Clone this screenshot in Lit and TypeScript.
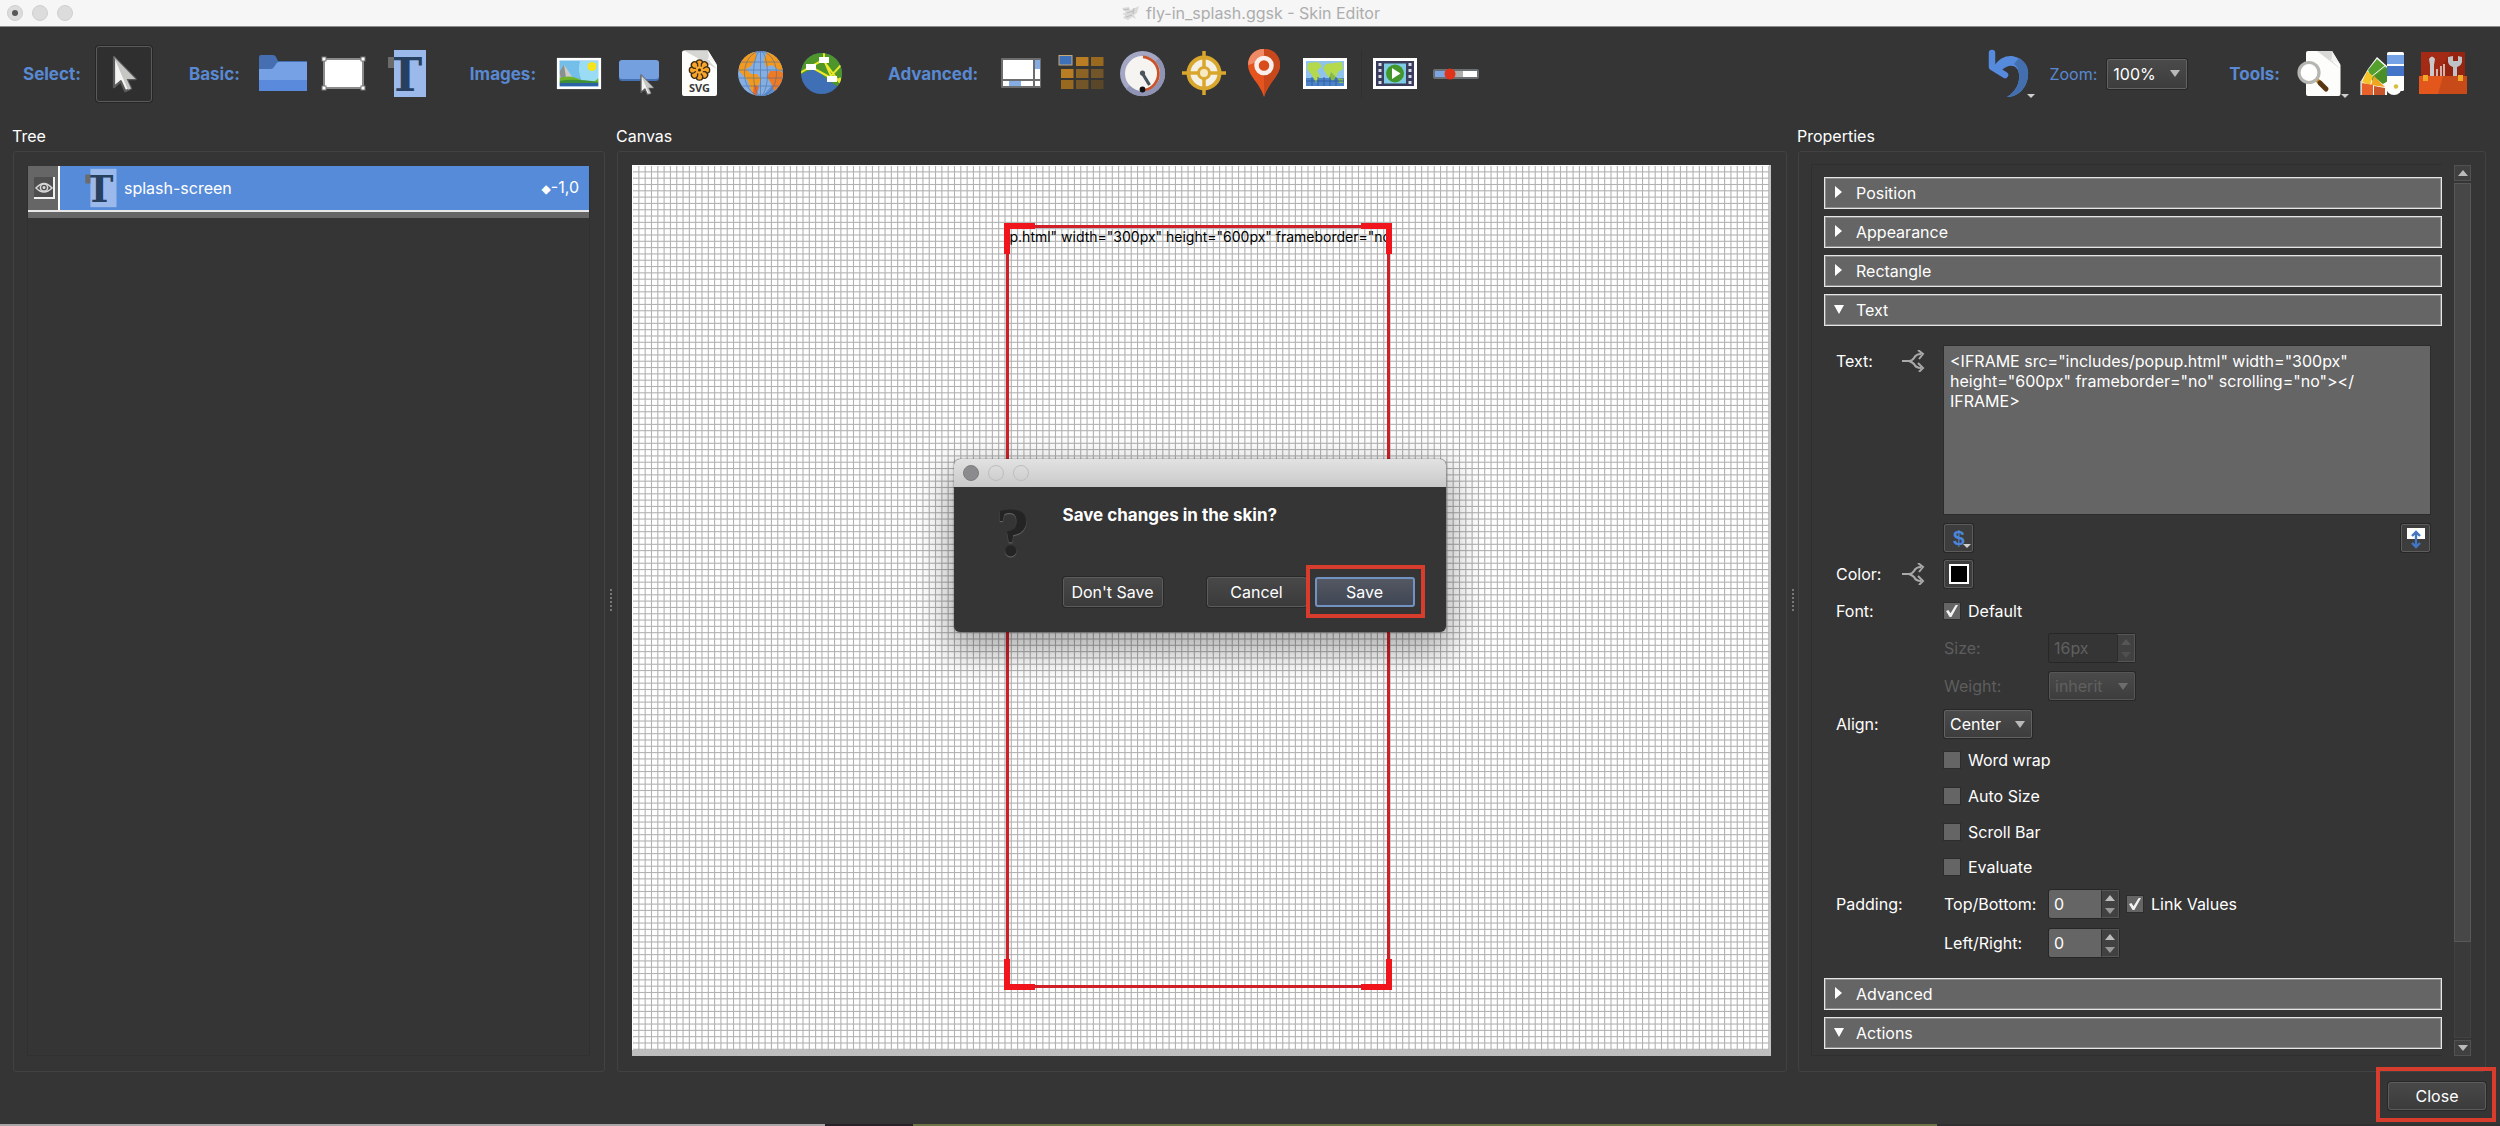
import { LitElement, html, css, svg, TemplateResult } from "lit";
import { customElement, property } from "lit/decorators.js";

const icon = (content: unknown) =>
  html`<svg class="icon" width="56" height="54" viewBox="0 0 56 54" aria-hidden="true">${content}</svg>`;

const cursor = (x: number, y: number, s: number) => svg`
  <g transform="translate(${x} ${y}) scale(${s})">
    <path d="M0 0V33.500L7.500 27L12.500 38L19 35L14 24.500H24Z" fill="#f4f4f2" stroke="#5b5b5b" stroke-width="2.500" stroke-linejoin="round"/>
    <path d="M0 0L24 24.500H14L19 35L15.500 36.500L9 21Z" fill="#c6c6c4"/>
  </g>`;

const dropMark = (x: number, y: number) =>
  svg`<path d="M${x} ${y}h8l-4 4z" fill="#cfcfcf"/>`;

const letterT = svg`
  <rect x="17" y="3" width="32" height="47" fill="#9bb9ea"/>
  <text class="slab" x="11" y="44" fill="#27405f">T</text>
  <rect x="11" y="10" width="6" height="11" fill="#6b6b6b"/>`;

const ICONS = {
  select: icon(cursor(17, 10, 0.9)),
  folder: icon(svg`
    <path d="M4 10q0-2 2-2h12q2 0 3 2l2 4h29v4H4z" fill="#456fb0"/>
    <path d="M4 11h16v12H4z" fill="#456fb0"/>
    <path d="M4 22h12q2 0 3-2l2-3q1-2 3-2h28v29H4z" fill="#76a1e5"/>
    <path d="M4 33h48v11H4z" fill="#5a8adb"/>`),
  rectangle: icon(svg`
    <rect x="8" y="12" width="39" height="29" fill="#fff" stroke="#8b8b8b" stroke-width="2"/>
    ${[[8, 12], [47, 12], [8, 41], [47, 41]].map(
      ([x, y]) => svg`<rect x=${x - 2} y=${y - 2} width="4" height="4" fill="#fff" stroke="#7a7a7a"/>`)}`),
  text: icon(letterT),
  image: icon(svg`
    <rect x="8" y="13" width="40" height="27" fill="#74bfe9"/>
    <path d="M29 14H48V34H31Q26 24 29 14z" fill="#9adcf4"/>
    <circle cx="41" cy="19.500" r="4.500" fill="#f7e21c"/>
    <path d="M8.500 27L13 17.500L22 31L25 36H8.500z" fill="#c9ccc9"/>
    <path d="M8.500 25L13 17.500L15 31L10 33z" fill="#8a8f90"/>
    <path d="M8.500 31Q20 27 30 33T47.500 31V35H8.500z" fill="#6fb42a"/>
    <path d="M8.500 34Q22 31 47.500 35V37H8.500z" fill="#3f8f3a"/>
    <path d="M8.500 36H47.500V39.500H8.500z" fill="#2b62a6"/>
    <rect x="7.200" y="12.200" width="41.600" height="28.600" fill="none" stroke="#fff" stroke-width="2.600"/>`),
  button: icon(svg`
    <rect x="7" y="14" width="40" height="20" rx="3" fill="#4470b4"/>
    <rect x="7" y="13" width="40" height="19" rx="3" fill="#74a0e0"/>
    ${cursor(29, 28, 0.52)}`),
  svg: icon(svg`
    <path d="M11 3.500H35L44 18V47q0 2-2 2H11q-2 0-2-2V5.500q0-2 2-2z" fill="#fdfdfc"/>
    <path d="M11 3.500H35L37 15L44 22z" fill="#d6d6d4"/>
    <path d="M35 3.500L44 18Q39 13 34.500 13Q37 9 35 3.500z" fill="#f6f6f4"/>
    ${[0, 45, 90, 135, 180, 225, 270, 315].map(a => svg`<g transform="rotate(${a} 26.500 23)">
      <circle cx="26.500" cy="16" r="3.200" fill="#f7a428" stroke="#3b2a12" stroke-width="1.300"/></g>`)}
    ${[0, 45, 90, 135, 180, 225, 270, 315].map(a => svg`<path transform="rotate(${a} 26.500 23)" d="M26.500 23V16.500" stroke="#f7a428" stroke-width="2.200"/>`)}
    <circle cx="26.500" cy="23" r="1.600" fill="#3b2a12"/>
    <text class="svg-tag" x="26.500" y="45" text-anchor="middle" fill="#3a3a3a">SVG</text>`),
  globe: icon(svg`
    <defs><clipPath id="globe"><circle cx="26.500" cy="26.500" r="22.500"/></clipPath></defs>
    <g clip-path="url(#globe)">
      <rect x="3" y="3" width="48" height="48" fill="#86aee2"/>
      <path d="M28 50L52 22V50z" fill="#5f8fd0"/>
      <path d="M12 3H20Q24 8 21 13L17 19L12 22L17 27H23L27 32L24 40L21 49L17 43L14 34L8 27L5 24Q4 12 12 3z" fill="#f39a1e"/>
      <path d="M33 5L46 9L51 22L46 24L38 18L32 20L30 13z" fill="#f39a1e"/>
      <path d="M36 24L46 24L51 27L47 38L40 44L37 36L33 30z" fill="#ef7a25"/>
      <path d="M20 38L25 40L22 49L19 46z" fill="#ef6a25"/>
      <g fill="none" stroke="#3f68a5" stroke-width="0.900" opacity="0.600">
        <ellipse cx="26.500" cy="26.500" rx="7" ry="22"/><ellipse cx="26.500" cy="26.500" rx="16" ry="22"/>
        <path d="M3 15H50M3 23H50M3 31H50M3 39H50M26.500 3V50"/>
      </g>
    </g>`),
  vector: icon(svg`
    <defs><clipPath id="vec"><circle cx="26.500" cy="26.500" r="20.500"/></clipPath></defs>
    <g clip-path="url(#vec)">
      <rect x="5" y="5" width="44" height="44" fill="#3f6fb5"/>
      <path d="M5 5H49V42Q40 38 37 36Q30 32 24 24Q18 20 5 28z" fill="#4e962a"/>
      <path d="M5 26L15 20L28 13M29 6V13L36 29L47 17M16 20L38 32M28 13L48 40" fill="none" stroke="#ece82a" stroke-width="2"/>
      <path d="M44 31l6 10" stroke="#ece82a" stroke-width="3"/>
    </g>
    <path d="M24 10h10v6H24zM11 17h10v6H11zM32 29h10v6H32z" fill="#fff"/>`),
  scroll: icon(svg`
    <rect x="8" y="11" width="40" height="30" rx="1" fill="#6d6d6d"/>
    <path d="M10 13H40V32H10zM10 34H40V39H10zM42 13H47V32H42zM42 34H47V39H42z" fill="#fff"/>
    <path d="M16 34H28V39H16zM42 13H47V22H42z" fill="#85ace3"/>`),
  cloner: icon(svg`
    <rect x="5" y="8.500" width="13" height="9.500" fill="#3f71bb" stroke="#c9a878"/>
    ${[["22", "10", "#b97d23"], ["37", "10", "#98691f"], ["7", "22", "#b97d23"], ["22", "22", "#8b6325"], ["37", "22", "#73552a"],
      ["7", "33", "#98691f"], ["22", "33", "#73552a"], ["37", "33", "#5a4628"]].map(
      ([x, y, c]) => svg`<rect x=${x} y=${y} width="12.500" height="9" fill=${c}/>`)}`),
  gauge: icon(svg`
    <circle cx="27.500" cy="26.500" r="22.500" fill="#a4a7c3"/>
    <path d="M11 42A22.500 22.500 0 0 0 44 11z" fill="#8f93b4"/>
    <circle cx="27.500" cy="26.500" r="17.500" fill="#f5f4f1"/>
    <path d="M28 9.800A16.800 16.800 0 0 1 30 43" fill="none" stroke="#c9542c" stroke-width="2.800"/>
    <path d="M27.500 26.500L34.500 38" stroke="#4a545a" stroke-width="3.200"/>
    <circle cx="27.500" cy="26" r="2.600" fill="#4a545a"/><circle cx="27.500" cy="42.500" r="2.900" fill="#111"/>`),
  hotspot: icon(svg`
    <circle cx="28" cy="26" r="15.500" fill="#f4f0e3" stroke="#d9a62e" stroke-width="4"/>
    <path d="M28 4V48M6 26H50" stroke="#d9a62e" stroke-width="3.500"/>
    <circle cx="28" cy="26" r="7" fill="#d9a62e"/><circle cx="28" cy="26" r="4" fill="#f7e9c0"/>`),
  pin: icon(svg`
    <path d="M27 2C17 2 11 9 11 18C11 29 23 36 27 50C31 36 43 29 43 18C43 9 37 2 27 2z" fill="#e5531f"/>
    <path d="M27 2C37 2 43 9 43 18C43 29 31 36 27 50z" fill="#c9481b"/>
    <path d="M27 2C17 2 11 9 11 18Q20 16 27 8z" fill="#f08a66"/>
    <circle cx="27" cy="18.500" r="7.500" fill="#d94c1c" stroke="#f8efec" stroke-width="4.500"/>`),
  map: icon(svg`
    <rect x="5" y="11" width="44" height="31" fill="#fff"/>
    <rect x="8" y="14" width="38" height="25" fill="#8fc3ee"/>
    <path d="M8 31H46V39H8z" fill="#4c82c8"/>
    <path d="M10 16L20 15L24 19L19 24L22 29L18 36L14 28L9 22zM28 17L44 15L45 22L40 25L38 30L33 25L31 31L27 25L25 21z" fill="#b5d94c"/>
    <path d="M33 25L38 30L35 34L31 31zM40 31L45 32V36H41z" fill="#86bd43"/>
    <path d="M14 30V39M20 30V39M26 30V39M32 30V39M38 30V39M8 34H46" stroke="#2f5f9e" stroke-width="0.900"/>`),
  video: icon(svg`
    <rect x="6" y="11" width="44" height="31" fill="#fff"/>
    <rect x="9" y="14" width="38" height="25" fill="#393d5b"/>
    <rect x="17" y="16.500" width="22" height="20" fill="#7fcbe6"/>
    ${[16, 22, 28, 34].map(y => svg`<path d="M11.500 ${y}h3v3h-3zM41.500 ${y}h3v3h-3z" fill="#d6d9e4"/>`)}
    <circle cx="28" cy="26.500" r="9" fill="#43962b"/><path d="M25 21L33.500 26.500L25 32z" fill="#fff"/>`),
  seekbar: icon(svg`
    <rect x="5" y="22" width="46" height="10" rx="2" fill="#6a6f74"/>
    <path d="M7 24H19V30H7z" fill="#7ba6e0"/><path d="M25 24H35V30H25z" fill="#aeaeac"/><path d="M35 24H49V30H35z" fill="#fff"/>
    <circle cx="22" cy="27" r="5.500" fill="#e0331b"/>`),
  undo: icon(svg`
    <path d="M12 21C18 10 27 8 33 9.500C42 11 48 20 47 29C46 40 38 50 26 50C35 44 39 36 38 27C37 19 29 15 20 24z" fill="#568add"/>
    <path d="M38 11C45 15 48 21 47 29C46 40 38 50 26 50C35 44 39 36 38 27Q37 19 33 17z" fill="#446faf"/>
    <path d="M11 6V20L24 28" fill="none" stroke="#568add" stroke-width="6.500" stroke-linecap="round" stroke-linejoin="round"/>
    ${dropMark(46, 47)}`),
  preview: icon(svg`
    <path d="M15 4H39L47.500 18V47q0 2-2 2H15q-2 0-2-2V6q0-2 2-2z" fill="#fdfdfc"/>
    <path d="M24 4H39L40 15L47.500 22z" fill="#d8d8d6"/>
    <path d="M39 4L47.500 18Q43 14 38 14Q40 9 39 4z" fill="#f2f2f0"/>
    <path d="M24 33L28 37" stroke="#c78f24" stroke-width="4"/>
    <path d="M27 36L33 42" stroke="#5a3512" stroke-width="5" stroke-linecap="round"/>
    <circle cx="16" cy="25.500" r="10" fill="#fff" stroke="#b5b5b2" stroke-width="3.200"/>
    ${dropMark(48, 47)}`),
  swatches: icon(svg`
    <path d="M7 34L14 22L23 10L34 20L33 48H7z" fill="#fdfdfc"/>
    <path d="M23 12L32 20L19 35L14 23z" fill="#55a02c"/><path d="M32 20L34 22V34L29 37L20 30z" fill="#4a8e28"/>
    <path d="M32 18L17 30" stroke="#fdfdfc" stroke-width="1"/>
    <path d="M13 24L19 29L16 38L8 35z" fill="#f5c227"/><path d="M20 29L31 40L17 38z" fill="#efa723"/>
    <path d="M8 36L19 38V48H8z" fill="#e8602a"/><path d="M20 39L31 41V48H20z" fill="#c9552a"/>
    <path d="M7 48V34" stroke="#c4c4c2" stroke-width="1.500"/>
    <rect x="33" y="5" width="17" height="39" rx="1.500" fill="#fdfdfc"/><circle cx="40" cy="40" r="8" fill="#fdfdfc"/>
    <path d="M33 8H50V17H33z" fill="#75a2e6"/><path d="M33 19H50V29H33z" fill="#4474c8"/>
    <circle cx="42" cy="39.500" r="2.200" fill="#d6bf3c"/>`),
  toolbox: icon(svg`
    <rect x="6" y="5" width="44" height="26" fill="#a32a14"/>
    <path d="M36 5H50V31H20z" fill="#94240f"/>
    <rect x="4" y="29" width="48" height="18" fill="#e4571c"/><path d="M28 29H52V47H23z" fill="#c84a18"/>
    <rect x="8" y="28" width="5" height="6" fill="#f0a828"/><rect x="43" y="28" width="5" height="6" fill="#f0a828"/>
    <path d="M14 12q3-5 6 0l-1 6v11h-4V18z" fill="#c9c9cb"/>
    <path d="M22 22V29M26 19V29M29 17V29" stroke="#e6e1df" stroke-width="1.500"/>
    <path d="M33 10V15q1 4 5 5V29h4V20q4-1 5-5V10l-4-1v5h-5V9z" fill="#bfc3c8"/>`),
};

const branch = html`<svg class="branch" width="24" height="22" viewBox="0 0 24 22" aria-hidden="true">
  <g fill="none" stroke="#a9a9a9" stroke-width="2.200"><path d="M1 11H8Q11 11 13 8Q15 4 20 4M8 11Q11 12 13 14Q15 18 20 18"/></g>
  <path d="M17 0L22 4L18 9M17 13L22 18L18 22" fill="none" stroke="#a9a9a9" stroke-width="2"/></svg>`;

/** Drop-down with a caret, sized by its container. */
@customElement("skin-select")
class SkinSelect extends LitElement {
  @property() value = "";
  @property() label = "";
  @property({ type: Boolean, reflect: true }) disabled = false;
  static styles = css`
    :host { display: inline-block; height: 28px; position: relative; vertical-align: top; }
    select {
      appearance: none; box-sizing: border-box; width: 100%; height: 100%; margin: 0; padding: 0 0 0 5px;
      font: 16px/20px Inter, "Liberation Sans", sans-serif; color: #fff;
      background: linear-gradient(#4a4a4a, #3d3d3d); border: 1px solid #626262; border-radius: 2px;
      box-shadow: 0 0 0 1px #272727;
    }
    .caret { position: absolute; right: 7px; top: 11px; pointer-events: none; }
    :host([disabled]) select { color: #606060; opacity: 1; border-color: #565656; }
    :host([disabled]) .caret { opacity: 0.35; }
  `;
  render() {
    return html`<select aria-label=${this.label} ?disabled=${this.disabled}><option>${this.value}</option></select>
      <svg class="caret" width="10" height="7" viewBox="0 0 10 7"><path d="M0 0H10L5 7z" fill="#b9b9b9"/></svg>`;
  }
}

/** Numeric field with two step buttons. */
@customElement("skin-spin")
class SkinSpin extends LitElement {
  @property() value = "";
  @property() label = "";
  @property({ type: Boolean, reflect: true }) disabled = false;
  static styles = css`
    :host { display: inline-flex; height: 28px; width: 70px; box-shadow: 0 0 0 1px #272727; border-radius: 2px; vertical-align: top; }
    :host([disabled]) { width: 86px; }
    input {
      flex: 1; min-width: 0; box-sizing: border-box; margin: 0; padding: 0 0 0 5px; border: 0; background: #656565;
      font: 16px/20px Inter, "Liberation Sans", sans-serif; color: #fff; border-radius: 2px 0 0 2px;
    }
    .steps { display: flex; flex-direction: column; width: 18px; box-sizing: border-box; border: 1px solid #565656; border-left-color: #2c2c2c; }
    button { flex: 1; display: grid; place-items: center; padding: 0; border: 0; background: #414141; color: #bdbdbd; }
    :host([disabled]) input { background: #353535; color: #606060; }
    :host([disabled]) button { color: #565656; }
  `;
  render() {
    return html`<input type="text" aria-label=${this.label} .value=${this.value} ?disabled=${this.disabled}>
      <div class="steps">
        <button aria-label="Increase" ?disabled=${this.disabled}><svg width="10" height="6" viewBox="0 0 10 6"><path d="M0 6H10L5 0z" fill="currentColor"/></svg></button>
        <button aria-label="Decrease" ?disabled=${this.disabled}><svg width="10" height="6" viewBox="0 0 10 6"><path d="M0 0H10L5 6z" fill="currentColor" opacity="0.700"/></svg></button>
      </div>`;
  }
}

const GRID_TILE = 101;
const GRID_LINES = 16;

@customElement("app-root")
class AppRoot extends LitElement {
  static styles = css`
    :host {
      display: flex; flex-direction: column; min-height: 100vh; background: #353535; color: #fff;
      font: 16px/20px Inter, "Liberation Sans", sans-serif;
    }
    * { box-sizing: border-box; }
    button { font: inherit; color: inherit; }
    .slab { font: bold 46px "DejaVu Serif", serif; }
    .svg-tag { font: bold 11px "Open Sans", sans-serif; }

    .titlebar {
      display: grid; grid-template-columns: 1fr auto 1fr; align-items: center; height: 27px;
      background: #f6f6f6; border-bottom: 1px solid #8d8d8d; color: #adadad;
    }
    .lights { display: flex; gap: 9px; padding-left: 7px; }
    .lights i { width: 16px; height: 16px; border-radius: 50%; background: #dcdcdc; border: 1px solid #cfcfcf; display: grid; place-items: center; }
    .lights i.edited::after { content: ""; width: 6px; height: 6px; border-radius: 50%; background: #575757; }
    .title { display: flex; align-items: center; gap: 6px; }

    .toolbar { display: flex; align-items: center; height: 93px; padding: 0 29px 0 23px; color: #5a89d3; }
    .group { display: flex; align-items: center; gap: 5px; margin-right: 37px; }
    .group > b { margin-right: 10px; font-weight: 700; font-size: 17px; }
    .group:last-child { margin-right: 0; }
    .group:last-child > b { margin-right: 8px; }
    .spring { flex: 1; }
    .tool { width: 56px; height: 56px; padding: 0; border: 0; background: none; display: grid; place-items: center; flex: none; }
    .tool.active { border: 1px solid #5a5a5a; border-radius: 3px; background: #2f2f2f; box-shadow: 0 0 0 1px #262626; }
    .divider { width: 3px; height: 48px; border-right: 1px solid #303030; }
    .zoom { gap: 10px; margin-right: 42px; }
    .zoom .tool { margin-right: 2px; }
    .zoom skin-select { width: 80px; height: 30px; }

    .panels { flex: 1; display: grid; grid-template-columns: 592px 12px minmax(0, 1fr) 11px 688px; padding: 0 14px 0 13px; }
    .panel { display: flex; flex-direction: column; min-width: 0; }
    .panel h2 { margin: 0 -1px; font-size: 16px; line-height: 32px; height: 31px; font-weight: 400; }
    .frame { flex: 1; border: 1px solid #424242; border-radius: 3px; padding: 14px 15px 15px 14px; display: flex; min-height: 0; }
    .splitter { display: grid; place-items: center; }
    .splitter::before { content: ""; width: 2px; height: 23px; background: repeating-linear-gradient(#777 0 2px, transparent 2px 4px); margin-top: 8px; }

    .tree { flex: 1; border: 1px solid #303030; border-top: 0; margin: 0 -1px; }
    .node { display: flex; height: 44px; background: #568bd9; align-items: center; }
    .node .eye { width: 30px; height: 44px; padding: 0 0 0 2px; border: 0; background: #666; display: grid; place-items: center; }
    .node .bar { width: 2px; height: 44px; background: #fff; }
    .node .mark { width: 36px; height: 40px; margin: 0 5px 0 23px; overflow: visible; }
    .node .name { flex: 1; }
    .node .order { padding-right: 10px; }
    .node .diamond { font: 12px/20px "DejaVu Sans", sans-serif; }
    .underline { height: 8px; background: #666; border-top: 2px solid #e8e8e8; }

    .canvas { flex: 1; position: relative; background: #fff; border-bottom: 6px solid #bebebe; border-right: 2px solid #c4c4c4; }
    .canvas-frame { padding-top: 13px; padding-left: 14px; }
    .mesh { position: absolute; inset: 0; width: 100%; height: 100%; }
    .selection { position: absolute; left: calc(50% - 197px); top: 58px; width: 388px; height: 767px; }
    .selection::before { content: ""; position: absolute; inset: 2px; border: 3px solid #cf2029; }
    .selection i { position: absolute; width: 31px; height: 31px; border: 0 solid #f0141c; }
    .selection .nw { left: 0; top: 0; border-width: 6px 0 0 6px; }
    .selection .ne { right: 0; top: 0; border-width: 6px 6px 0 0; }
    .selection .sw { left: 0; bottom: 0; border-width: 0 0 6px 6px; }
    .selection .se { right: 0; bottom: 0; border-width: 0 6px 6px 0; }
    .snippet {
      position: absolute; left: 6px; right: 0; top: 4px; overflow: hidden; white-space: nowrap;
      color: #000; font-size: 14px;
    }

    .dialog {
      position: absolute; left: calc(50% - 247px); top: 294px; width: 492px; border-radius: 6px; background: #353535;
      box-shadow: 0 14px 34px 6px rgba(0, 0, 0, 0.32), 0 0 2px rgba(0, 0, 0, 0.5); padding: 0; border: 0; margin: 0; color: #fff; display: block;
    }
    .dialog header { display: flex; gap: 9px; align-items: center; height: 28px; padding-left: 9px; border-radius: 6px 6px 0 0; background: linear-gradient(#e2e2e2, #c9c9c9); }
    .dialog header i { width: 16px; height: 16px; border-radius: 50%; border: 1px solid #bdbdbd; }
    .dialog header i:first-child { background: #8b8b8d; border-color: #7e7e80; }
    .ask { display: grid; grid-template-columns: 109px 1fr; height: 145px; }
    .mark-q { font: bold 70px/76px "Liberation Serif", serif; color: #242424; text-shadow: 0 1px 1px #6a6a6a; padding: 8px 0 0 42px; }
    .ask p { margin: 0; padding-top: 18px; font-weight: 700; font-size: 17px; line-height: 20px; }
    .answers { display: flex; padding-top: 52px; }
    .push {
      height: 30px; padding: 0; border: 1px solid #5c5c5c; border-radius: 3px; background: linear-gradient(#484848, #3b3b3b);
      box-shadow: 0 0 0 1px #282828; width: 100px; white-space: nowrap;
    }
    .cancel { margin: 0 8px 0 44px; }
    .primary { border: 2px solid #7292c2; background: linear-gradient(#535862, #404654); box-shadow: none; }
    .callout { position: relative; }
    .callout::after { content: ""; position: absolute; border: 4px solid #d73c2d; inset: -14px -12px -13px -11px; pointer-events: none; }

    .props { padding: 12px 14px 15px 12px; gap: 12px; }
    .sheet { flex: 1; min-width: 0; border: 1px solid #2f2f2f; border-right: 0; padding: 12px 0 5px 12px; display: flex; flex-direction: column; gap: 7px; }
    .section {
      display: flex; align-items: center; gap: 12px; width: 100%; height: 32px; padding: 0 9px; text-align: left; flex: none;
      background: #656565; border: 1px solid #e6e6e6; box-shadow: inset 0 0 0 1px #8d8d8d;
    }
    .section svg { margin-top: -3px; }
    .form {
      display: grid; grid-template-columns: 57px 51px 105px 1fr; align-items: center; gap: 8px 0;
      grid-template-rows: 170px 28px 28px 30px 28px 32px 28px 28px 28px 27px 28px 30px 32px; padding: 13px 12px 12px;
    }
    .form > * { grid-column-start: 3; }
    .form .key { grid-column: 1 / span 1; }
    .form .link { grid-column: 2 / span 1; padding-left: 8px; line-height: 0; }
    .form .wide { grid-column: 3 / span 2; }
    .form .last { grid-column: 4 / span 1; }
    .top { align-self: start; }
    .key.top { padding-top: 5px; }
    .link.top { padding-top: 4px; }
    textarea {
      display: block; width: 100%; height: 168px; margin: 0; padding: 5px 6px; border: 0; resize: none; background: #656565;
      color: #fff; font: 16px/20px Inter, "Liberation Sans", sans-serif; box-shadow: 0 0 0 1px #2c2c2c;
    }
    .split { display: flex; justify-content: space-between; }
    .mini { width: 29px; height: 28px; padding: 0; border: 1px solid #5c5c5c; border-radius: 2px; background: #3d3d3d; box-shadow: 0 0 0 1px #272727; display: grid; place-items: center; }
    .dollar { font: bold 21px "Liberation Sans", sans-serif; }
    .well { width: 20px; height: 20px; background: #000; border: 2px solid #fff; }
    .check { display: flex; align-items: center; gap: 8px; }
    .check input { appearance: none; width: 16px; height: 16px; margin: 0; background: #656565; box-shadow: 0 0 0 1px #2c2c2c; display: grid; place-items: center; }
    .check input:checked::before { content: ""; width: 12px; height: 12px; background: #f2f2f2; clip-path: polygon(0 50%, 20% 42%, 38% 68%, 80% 0, 100% 0, 45% 100%, 30% 100%); }
    .dim { color: #5e5e5e; }
    .inline { display: flex; align-items: center; gap: 8px; }
    .weight { width: 86px; }
    .align { width: 88px; }

    .scrollbar { display: flex; flex-direction: column; width: 17px; gap: 2px; margin-top: 1px; }
    .scrollbar button { height: 16px; padding: 0; border: 1px solid #525252; background: #404040; display: grid; place-items: center; }
    .scrollbar .track { flex: 1; background: #3a3a3a; border: 1px solid #424242; display: flex; flex-direction: column; }
    .scrollbar .thumb { height: 89%; background: #474747; border: 1px solid #585858; margin: -1px; }

    .footer { display: flex; justify-content: flex-end; height: 52px; padding: 10px 14px 0; }
    .close { width: 98px; height: 28px; }
    .close::after { inset: -16px -11px -13px -13px; }
    .edge { display: flex; height: 2px; background: #6c7347; }
    .edge i:nth-child(1) { width: 33%; background: #aaa6a8; }
    .edge i:nth-child(2) { width: 88px; background: #282228; }
    .edge i:nth-child(3) { flex: 1; }
    .edge i:nth-child(4) { width: 563px; background: #303030; }
  `;

  private tool(name: string, art: TemplateResult, active = false) {
    return html`<button class="tool ${active ? "active" : ""}" aria-label=${name}>${art}</button>`;
  }

  private section(title: string, open = false) {
    return html`<button class="section" aria-expanded=${open}>
      <svg width="10" height="12" viewBox="0 0 10 12" aria-hidden="true"><path d=${open ? "M0 2H10L5 11z" : "M1 0V12L8 6z"} fill="#fff"/></svg>
      ${title}</button>`;
  }

  private check(title: string, checked = false) {
    return html`<label class="check wide"><input type="checkbox" ?checked=${checked}>${title}</label>`;
  }

  private mesh() {
    const steps = Array.from({ length: GRID_LINES }, (_, i) => (i * GRID_TILE) / GRID_LINES);
    return html`<svg class="mesh" aria-hidden="true">
      <defs><pattern id="mesh" width=${GRID_TILE} height=${GRID_TILE} patternUnits="userSpaceOnUse">
        ${steps.map(p => svg`<rect x=${p} y="0" width="1.100" height=${GRID_TILE} fill="#b2b2b2"/><rect x="0" y=${p} width=${GRID_TILE} height="1.100" fill="#b2b2b2"/>`)}
      </pattern></defs>
      <rect width="100%" height="100%" fill="url(#mesh)"/>
      <path d="M0 0H3000V1H1V3000H0z" fill="#fff"/></svg>`;
  }

  private toolbar() {
    return html`<nav class="toolbar">
      <div class="group"><b>Select:</b>${this.tool("Select", ICONS.select, true)}</div>
      <div class="group"><b>Basic:</b>
        ${this.tool("Container", ICONS.folder)}${this.tool("Rectangle", ICONS.rectangle)}${this.tool("Text", ICONS.text)}</div>
      <div class="group"><b>Images:</b>
        ${this.tool("Image", ICONS.image)}${this.tool("Button", ICONS.button)}${this.tool("SVG", ICONS.svg)}
        ${this.tool("External", ICONS.globe)}${this.tool("External vector", ICONS.vector)}</div>
      <div class="group"><b>Advanced:</b>
        ${this.tool("Scroll area", ICONS.scroll)}${this.tool("Cloner", ICONS.cloner)}${this.tool("Timer", ICONS.gauge)}
        ${this.tool("Hotspot", ICONS.hotspot)}${this.tool("Marker", ICONS.pin)}${this.tool("Map", ICONS.map)}
        <span class="divider"></span>
        ${this.tool("Video", ICONS.video)}${this.tool("Seek bar", ICONS.seekbar)}</div>
      <span class="spring"></span>
      <div class="group zoom">${this.tool("Undo", ICONS.undo)}<span>Zoom:</span><skin-select label="Zoom" value="100%"></skin-select></div>
      <div class="group"><b>Tools:</b>
        ${this.tool("Preview", ICONS.preview)}${this.tool("Colors", ICONS.swatches)}${this.tool("Toolbox", ICONS.toolbox)}</div>
    </nav>`;
  }

  private tree() {
    return html`<section class="panel"><h2>Tree</h2><div class="frame"><div class="tree">
      <div class="node">
        <button class="eye" aria-label="Visibility"><svg width="21" height="22" viewBox="0 0 21 22">
          <rect width="19" height="20" fill="#4f4f4f"/><path d="M0 21H20V0" fill="none" stroke="#f0f0f0" stroke-width="2"/>
          <path d="M2 11Q10 2 18 11Q10 19 2 11z" fill="none" stroke="#d8d8d8" stroke-width="1.500"/><circle cx="10" cy="10.500" r="3.600" fill="#4f4f4f" stroke="#d8d8d8" stroke-width="1.500"/><circle cx="10" cy="10.500" r="1.500" fill="#d8d8d8"/></svg></button>
        <span class="bar"></span>
        <svg class="mark" viewBox="8 2 44 49" aria-hidden="true">${letterT}</svg>
        <span class="name">splash-screen</span><span class="order"><span class="diamond">◆</span>-1,0</span>
      </div>
      <div class="underline"></div>
    </div></div></section>`;
  }

  private dialog() {
    return html`<dialog class="dialog" open aria-label="Save changes">
      <header><i></i><i></i><i></i></header>
      <div class="ask">
        <div class="mark-q" aria-hidden="true">?</div>
        <div>
          <p>Save changes in the skin?</p>
          <div class="answers">
            <button class="push">Don't Save</button>
            <button class="push cancel">Cancel</button>
            <button class="push primary callout">Save</button>
          </div>
        </div>
      </div></dialog>`;
  }

  private canvas() {
    return html`<section class="panel"><h2>Canvas</h2><div class="frame canvas-frame"><div class="canvas">
      ${this.mesh()}
      <div class="selection"><div class="snippet">p.html" width="300px" height="600px" frameborder="no"</div>
        <i class="nw"></i><i class="ne"></i><i class="sw"></i><i class="se"></i></div>
      ${this.dialog()}
    </div></div></section>`;
  }

  private properties() {
    const source = `<IFRAME src="includes/popup.html" width="300px" height="600px" frameborder="no" scrolling="no"></\nIFRAME>`;
    return html`<section class="panel"><h2>Properties</h2><div class="frame props">
      <div class="sheet">
        ${this.section("Position")}${this.section("Appearance")}${this.section("Rectangle")}${this.section("Text", true)}
        <div class="form">
          <label class="key top" for="source">Text:</label><span class="link top">${branch}</span>
          <div class="wide top"><textarea id="source" spellcheck="false" .value=${source}></textarea></div>
          <div class="wide split">
            <button class="mini" aria-label="Placeholder"><svg width="26" height="26" viewBox="0 0 26 26"><text class="dollar" x="7" y="20" fill="#4b86dc">$</text>${dropMark(17, 19)}</svg></button>
            <button class="mini" aria-label="Expand"><svg width="22" height="22" viewBox="0 0 22 22"><rect x="2" y="1" width="18" height="11" fill="#fff"/><path d="M11 6V19M7 9L11 5L15 9M7 16L11 20L15 16" fill="none" stroke="#4276c4" stroke-width="2.400"/></svg></button>
          </div>
          <span class="key">Color:</span><span class="link">${branch}</span>
          <div class="wide"><button class="mini" aria-label="Color"><span class="well"></span></button></div>
          <span class="key">Font:</span>${this.check("Default", true)}
          <span class="dim">Size:</span><div class="last"><skin-spin label="Size" value="16px" disabled></skin-spin></div>
          <span class="dim">Weight:</span><div class="last"><skin-select class="weight" label="Weight" value="inherit" disabled></skin-select></div>
          <span class="key">Align:</span><div class="wide"><skin-select class="align" label="Align" value="Center"></skin-select></div>
          ${this.check("Word wrap")}${this.check("Auto Size")}${this.check("Scroll Bar")}${this.check("Evaluate")}
          <span class="key">Padding:</span><span>Top/Bottom:</span>
          <div class="last inline"><skin-spin label="Top/Bottom" value="0"></skin-spin>${this.check("Link Values", true)}</div>
          <span>Left/Right:</span><div class="last inline"><skin-spin label="Left/Right" value="0"></skin-spin></div>
        </div>
        ${this.section("Advanced")}${this.section("Actions", true)}
      </div>
      <div class="scrollbar">
        <button aria-label="Scroll up"><svg width="10" height="6" viewBox="0 0 10 6"><path d="M0 6H10L5 0z" fill="#bbb"/></svg></button>
        <div class="track"><div class="thumb"></div></div>
        <button aria-label="Scroll down"><svg width="10" height="6" viewBox="0 0 10 6"><path d="M0 0H10L5 6z" fill="#bbb"/></svg></button>
      </div>
    </div></section>`;
  }

  render() {
    return html`
      <header class="titlebar">
        <div class="lights"><i class="edited"></i><i></i><i></i></div>
        <div class="title">
          <svg width="20" height="16" viewBox="0 0 18 16" aria-hidden="true"><path d="M1 3L8 2L9 5L14 3L18 1L16 8L13 10L15 14L11 12L7 15L2 13L4 10L1 9L5 7z" fill="#dadada"/><path d="M2 5L8 4M6 8L12 6M5 12L11 10M13 3L12 9" stroke="#bcbcbc" fill="none"/></svg>
          <span>fly-in_splash.ggsk - Skin Editor</span>
        </div>
      </header>
      ${this.toolbar()}
      <main class="panels">
        ${this.tree()}<div class="splitter"></div>${this.canvas()}<div class="splitter"></div>${this.properties()}
      </main>
      <footer class="footer"><button class="push close callout">Close</button></footer>
      <div class="edge"><i></i><i></i><i></i><i></i></div>`;
  }
}
